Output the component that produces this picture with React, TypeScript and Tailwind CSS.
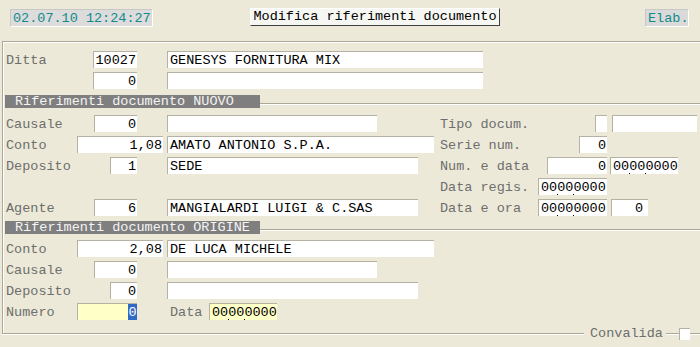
import React from 'react';

// box + label helpers for the XP-style form
const Lbl = ({ w, children }: { w: string; children?: React.ReactNode }) => (
  <span className={`${w} shrink-0 pt-[3px] text-[#6e6e6e] whitespace-pre`}>{children}</span>
);

const Box = ({
  w,
  right,
  yellow,
  children,
}: {
  w: string;
  right?: boolean;
  yellow?: boolean;
  children?: React.ReactNode;
}) => (
  <div
    className={`${w} h-[17px] shrink-0 border-t border-l border-[#b5b2a4] pt-[1px] leading-[16px] text-black whitespace-pre overflow-hidden ${
      right ? 'text-right pr-[1px]' : 'pl-[2px]'
    } ${yellow ? 'bg-[#ffffc8]' : 'bg-white'}`}
  >
    {children}
  </div>
);

const DateVal = ({ v = '00000000' }: { v?: string }) => (
  <span className="relative inline-block">
    {v}
    <span className="absolute left-[16px] bottom-[1px] w-px h-px bg-black" />
    <span className="absolute left-[32px] bottom-[1px] w-px h-px bg-black" />
  </span>
);

const Section = ({ title }: { title: string }) => (
  <div className="flex h-[13px]">
    <div className="ml-[1px] w-[255px] h-[13px] bg-[#7f7f7f] text-[#f4f4f4] leading-[14px] pl-[10px] whitespace-pre">
      {title}
    </div>
    <div className="flex-1 mt-[8px] h-[2px] border-t border-[#aca899] bg-white" />
  </div>
);

export default function App() {
  return (
    <div className="w-[700px] h-[347px] bg-[#ece9d8] overflow-hidden font-['Liberation_Mono','Courier_New',monospace] text-[13.5px]">
      {/* top bar */}
      <div className="h-[41px] flex items-start">
        <div className="ml-[10px] mt-[9px] w-[143px] h-[18px] bg-[#dcdcdc] border-t border-l border-[#c8c8c8] border-b border-r border-b-white border-r-white text-[#138a8a] leading-[17px] pl-[2px]">
          02.07.10 12:24:27
        </div>
        <button className="ml-[97px] mt-[8px] w-[250px] h-[18px] bg-[#f6f6f2] border border-t-white border-l-white border-r-[#404040] border-b-[#404040] text-black leading-[16px] text-center">
          Modifica riferimenti documento
        </button>
        <div className="ml-[145px] mt-[9px] w-[44px] h-[18px] bg-[#dadada] border-t border-l border-[#c8c8c8] border-b border-r border-b-white border-r-white text-[#138a8a] leading-[17px] pl-[2px]">
          Elab.
        </div>
      </div>

      {/* main frame */}
      <div className="ml-[2px] h-[294px] border-t border-l border-[#aca899]">
        <div className="h-full border-t border-l border-white">
          {/* Ditta */}
          <div className="mt-[8px] flex items-center h-[17px]">
            <Lbl w="w-[89px] pl-[2px]">Ditta</Lbl>
            <Box w="w-[44px]" right>10027</Box>
            <div className="ml-[30px]">
              <Box w="w-[316px]">GENESYS FORNITURA MIX</Box>
            </div>
          </div>
          <div className="mt-[4px] flex items-center h-[17px]">
            <Lbl w="w-[89px]" />
            <Box w="w-[44px]" right>0</Box>
            <div className="ml-[30px]">
              <Box w="w-[316px]" />
            </div>
          </div>

          <div className="mt-[6px]">
            <Section title="Riferimenti documento NUOVO" />
          </div>

          {/* NUOVO rows */}
          <div className="mt-[7px] flex items-center h-[17px]">
            <div className="w-[436px] flex items-center">
              <Lbl w="w-[90px] pl-[2px]">Causale</Lbl>
              <Box w="w-[43px]" right>0</Box>
              <div className="ml-[30px]">
                <Box w="w-[210px]" />
              </div>
            </div>
            <Lbl w="w-[155px]">Tipo docum.</Lbl>
            <Box w="w-[12px]" />
            <div className="ml-[5px]">
              <Box w="w-[85px]" />
            </div>
          </div>
          <div className="mt-[4px] flex items-center h-[17px]">
            <div className="w-[436px] flex items-center">
              <Lbl w="w-[73px] pl-[2px]">Conto</Lbl>
              <Box w="w-[86px]" right>1,08</Box>
              <div className="ml-[4px]">
                <Box w="w-[267px]">AMATO ANTONIO S.P.A.</Box>
              </div>
            </div>
            <Lbl w="w-[139px]">Serie num.</Lbl>
            <Box w="w-[28px]" right>0</Box>
          </div>
          <div className="mt-[4px] flex items-center h-[17px]">
            <div className="w-[436px] flex items-center">
              <Lbl w="w-[106px] pl-[2px]">Deposito</Lbl>
              <Box w="w-[27px]" right>1</Box>
              <div className="ml-[30px]">
                <Box w="w-[251px]">SEDE</Box>
              </div>
            </div>
            <Lbl w="w-[107px]">Num. e data</Lbl>
            <Box w="w-[60px]" right>0</Box>
            <div className="ml-[3px]">
              <Box w="w-[68px]">
                <DateVal />
              </Box>
            </div>
          </div>
          <div className="mt-[4px] flex items-center h-[17px]">
            <div className="w-[436px]" />
            <Lbl w="w-[98px]">Data regis.</Lbl>
            <Box w="w-[69px]">
              <DateVal />
            </Box>
          </div>
          <div className="mt-[4px] flex items-center h-[17px]">
            <div className="w-[436px] flex items-center">
              <Lbl w="w-[90px] pl-[2px]">Agente</Lbl>
              <Box w="w-[43px]" right>6</Box>
              <div className="ml-[30px]">
                <Box w="w-[251px]">MANGIALARDI LUIGI &amp; C.SAS</Box>
              </div>
            </div>
            <Lbl w="w-[98px]">Data e ora</Lbl>
            <Box w="w-[69px]">
              <DateVal />
            </Box>
            <div className="ml-[4px]">
              <div className="w-[37px] h-[17px] border-t border-l border-[#b5b2a4] bg-white pt-[1px] leading-[16px] text-right pr-[5px]">
                0
              </div>
            </div>
          </div>

          <div className="mt-[5px]">
            <Section title="Riferimenti documento ORIGINE" />
          </div>

          {/* ORIGINE rows */}
          <div className="mt-[6px] flex items-center h-[17px]">
            <Lbl w="w-[73px] pl-[2px]">Conto</Lbl>
            <Box w="w-[86px]" right>2,08</Box>
            <div className="ml-[4px]">
              <Box w="w-[267px]">DE LUCA MICHELE</Box>
            </div>
          </div>
          <div className="mt-[4px] flex items-center h-[17px]">
            <Lbl w="w-[90px] pl-[2px]">Causale</Lbl>
            <Box w="w-[43px]" right>0</Box>
            <div className="ml-[30px]">
              <Box w="w-[210px]" />
            </div>
          </div>
          <div className="mt-[4px] flex items-center h-[17px]">
            <Lbl w="w-[106px] pl-[2px]">Deposito</Lbl>
            <Box w="w-[27px]" right>0</Box>
            <div className="ml-[30px]">
              <Box w="w-[251px]" />
            </div>
          </div>
          <div className="mt-[4px] flex items-center h-[17px]">
            <Lbl w="w-[73px] pl-[2px]">Numero</Lbl>
            <div className="w-[60px] h-[17px] shrink-0 border-t border-l border-[#b5b2a4] bg-[#ffffc8] flex justify-end">
              <span className="h-[16px] w-[9px] bg-[#316ac5] text-white pt-[1px] leading-[15px] text-center">0</span>
            </div>
            <div className="ml-[33px]">
              <Lbl w="w-[39px] block">Data</Lbl>
            </div>
            <Box w="w-[68px]" yellow>
              <DateVal />
            </Box>
          </div>
        </div>
      </div>

      {/* bottom edge with Convalida */}
      <div className="-mt-[7px] flex items-center h-[12px]">
        <div className="ml-[2px] w-[582px] h-[2px] border-t border-[#aca899] bg-white" />
        <span className="ml-[6px] text-[#6e6e6e] leading-[12px]">Convalida</span>
        <div className="ml-[3px] w-[13px] h-[2px] border-t border-[#aca899] bg-white" />
        <div className="w-[11px] h-[12px] bg-white border-t border-l border-[#b5b2a4]" />
        <div className="flex-1 h-[2px] border-t border-[#aca899] bg-white" />
      </div>
    </div>
  );
}
